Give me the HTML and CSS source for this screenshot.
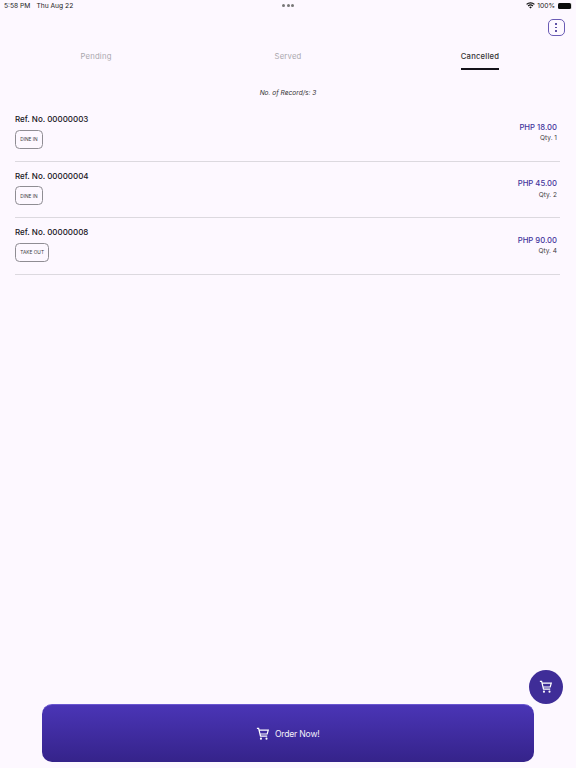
FILE: index.html
```html
<!DOCTYPE html>
<html lang="en">
<head>
<meta charset="utf-8">
<title>Orders</title>
<link rel="stylesheet" href="styles.css">
</head>
<body>
<div class="app">
  <header class="status">
    <div class="status-left"><span>5:58 PM</span><span>Thu Aug 22</span></div>
    <div class="status-dots"><i></i><i></i><i></i></div>
    <div class="status-right">
      <svg class="wifi" viewBox="0 0 16 12" aria-hidden="true"><path d="M8 11.5 5.7 8.9a3.4 3.4 0 0 1 4.600 0zM4.500 7.600 3 6a7.200 7.200 0 0 1 10 0l-1.500 1.600a5 5 0 0 0-7 0zM1.800 4.800.3 3.200a11 11 0 0 1 15.400 0l-1.500 1.600a9 9 0 0 0-12.400 0z"/></svg>
      <span>100%</span>
      <span class="battery"><span class="battery-fill"></span></span>
    </div>
  </header>

  <div class="toolbar">
    <button class="menu" aria-label="Menu"><i></i><i></i><i></i></button>
  </div>

  <nav class="tabs">
    <div class="tab"><span class="tab-label">Pending</span></div>
    <div class="tab"><span class="tab-label">Served</span></div>
    <div class="tab active"><span class="tab-label">Cancelled</span></div>
  </nav>

  <p class="count">No. of Record/s: 3</p>

  <section class="list">
    <article class="row">
      <div class="row-left"><div class="ref">Ref. No. 00000003</div><span class="tag">DINE IN</span></div>
      <div class="row-right"><div class="price">PHP 18.00</div><div class="qty">Qty. 1</div></div>
    </article>
    <article class="row">
      <div class="row-left"><div class="ref">Ref. No. 00000004</div><span class="tag">DINE IN</span></div>
      <div class="row-right"><div class="price">PHP 45.00</div><div class="qty">Qty. 2</div></div>
    </article>
    <article class="row">
      <div class="row-left"><div class="ref">Ref. No. 00000008</div><span class="tag">TAKE OUT</span></div>
      <div class="row-right"><div class="price">PHP 90.00</div><div class="qty">Qty. 4</div></div>
    </article>
  </section>

  <button class="fab" aria-label="Cart">
    <svg class="cart" viewBox="0 0 24 24" aria-hidden="true"><path d="M1.500 2.500h3l3.200 13h11.500M5.300 5.500H21l-1.800 6.500H7"/><circle cx="8.500" cy="20" r="1.800"/><circle cx="18" cy="20" r="1.800"/></svg>
  </button>

  <button class="order">
    <svg class="cart" viewBox="0 0 24 24" aria-hidden="true"><path d="M1.500 2.500h3l3.200 13h11.500M5.300 5.500H21l-1.800 6.500H7"/><circle cx="8.500" cy="20" r="1.800"/><circle cx="18" cy="20" r="1.800"/></svg>
    <span>Order Now!</span>
  </button>
</div>
</body>
</html>
```

FILE: styles.css
```css
* { box-sizing: border-box; }
html, body { margin: 0; padding: 0; }
body { background: #fdf8ff; font-family: Inter, "Liberation Sans", sans-serif; color: #1c1b1f; }
.app { position: relative; width: 576px; height: 768px; display: flex; flex-direction: column; overflow: hidden; }

.status { height: 11px; padding: 0 4px; display: flex; align-items: center; justify-content: space-between; font-size: 6.700px; color: #222; position: relative; }
.status-left { display: flex; gap: 6px; }
.status-dots { position: absolute; left: 282px; top: 4px; display: flex; gap: 1.500px; }
.status-dots i { width: 3px; height: 3px; border-radius: 50%; background: #777; }
.status-right { display: flex; align-items: center; gap: 2px; }
.wifi { width: 9px; height: 7px; fill: #111; }
.battery { width: 14px; height: 6px; margin-left: 1px; border-radius: 1.500px; background: #ddd; display: block; padding-right: 1px; }
.battery-fill { display: block; width: 12.500px; height: 6px; border-radius: 1.500px; background: #0c0c0c; }

.toolbar { height: 25px; padding: 8px 11.500px 0 0; display: flex; justify-content: flex-end; }
.menu { width: 17px; height: 17px; padding: 0; border: 1px solid #6a5bb5; border-radius: 5px; background: transparent; display: flex; flex-direction: column; align-items: center; justify-content: center; gap: 2px; }
.menu i { width: 1.600px; height: 1.600px; border-radius: 50%; background: #3f3194; }

.tabs { display: grid; grid-template-columns: repeat(3, 1fr); height: 34px; }
.tab { display: flex; justify-content: center; color: #a9a7ad; font-size: 7.700px; letter-spacing: .2px; }
.tab-label { height: 34px; padding-top: 15px; line-height: 12px; }
.tab.active { color: #333; font-weight: 500; }
.tab.active .tab-label { border-bottom: 2px solid #15131a; }

.count { margin: 0; padding-top: 16.500px; height: 35px; font-size: 6.600px; line-height: 12px; font-style: italic; text-align: center; color: #333; }

.list { padding: 0 16px 0 15px; }
.row { height: 56.600px; padding: 8px 3px 0 0; display: flex; justify-content: space-between; border-bottom: 1px solid #dcd9df; }
.ref { font-size: 8px; line-height: 12px; font-weight: 500; color: #17151c; }
.tag { margin-top: 2.500px; height: 19px; padding: 0 4.200px; display: inline-flex; align-items: center; border: 1px solid #8f8d93; border-radius: 4.500px; font-size: 4.800px; color: #3a383e; }
.row-right { padding-top: 8.500px; text-align: right; }
.price { font-size: 7.700px; line-height: 12px; font-weight: 500; color: #43359c; }
.qty { font-size: 6.500px; line-height: 9px; margin-top: .5px; color: #3f3d43; }

.fab { position: absolute; left: 529px; top: 670px; width: 34px; height: 34px; padding: 0; border: 0; border-radius: 50%; background: #3f2d98; display: flex; align-items: center; justify-content: center; }
.cart { width: 14px; height: 14px; fill: none; stroke: #fff; stroke-width: 2.100; }
.cart circle { fill: #fff; stroke: none; }

.order { margin: auto 42.500px 6px 42px; height: 58px; flex: none; padding: 0; border: 0; border-top: 1px solid #6a56d0; border-radius: 10px; background: linear-gradient(#4a35b6, #35238a); display: flex; align-items: center; justify-content: center; gap: 5px; color: #f4f1fb; font-family: inherit; font-size: 8.600px; letter-spacing: -.2px; }
```
